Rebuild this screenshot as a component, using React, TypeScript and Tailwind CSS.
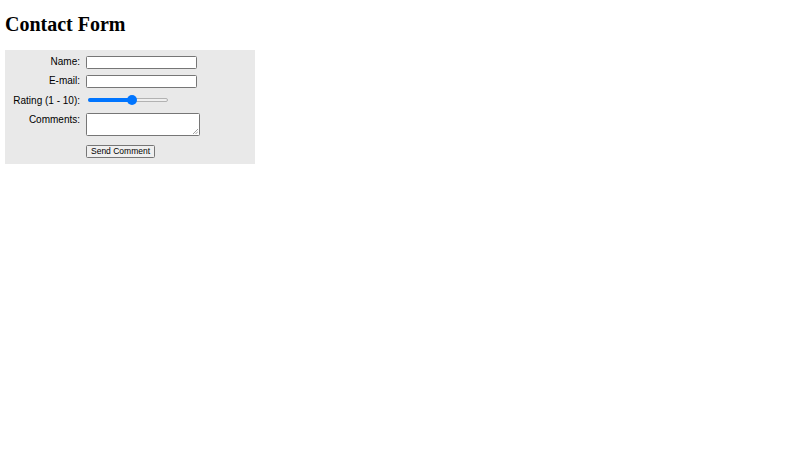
import React from "react";

export default function App() {
  const label = "w-[75px] text-right text-[10px] leading-[11px] text-black";
  const field =
    "h-[13px] border border-[#767676] rounded-[1.5px] bg-white px-[1px] text-[8.33px] outline-none";
  return (
    <div className="min-h-[450px] w-[800px] bg-white px-[5px]" style={{ fontFamily: '"Liberation Sans", Arial, sans-serif' }}>
      <h1
        className="pt-[13.4px] pb-[13.4px] text-[20px] font-bold leading-[23px] text-black"
        style={{ fontFamily: '"Liberation Serif", "Times New Roman", serif' }}
      >
        Contact Form
      </h1>
      <form className="flex w-[250px] flex-col bg-[#e9e9e9] pt-[6px] pb-[6px]">
        <div className="flex items-start gap-[6px]">
          <label className={label}>Name:</label>
          <input type="text" className={field + " w-[111px]"} />
        </div>
        <div className="mt-[6px] flex items-start gap-[6px]">
          <label className={label}>E-mail:</label>
          <input type="text" className={field + " w-[111px]"} />
        </div>
        <div className="mt-[5px] flex h-[14px] items-center gap-[6px]">
          <label className={label + " mt-[1px]"}>Rating (1 - 10):</label>
          <div className="relative ml-[2px] h-[10px] w-[80px]">
            <div className="absolute left-0 right-0 top-[3px] h-[4px] rounded-full border border-[#b2b2b2] bg-[#efefef]" />
            <div className="absolute left-0 top-[3px] h-[4px] w-[44px] rounded-full bg-[#0075ff]" />
            <div className="absolute left-[39px] top-0 h-[10px] w-[10px] rounded-full bg-[#0075ff]" />
          </div>
        </div>
        <div className="mt-[6px] flex items-start gap-[6px]">
          <label className={label + " mt-[1px]"}>Comments:</label>
          <div className="relative h-[23px] w-[114px] rounded-[1.5px] border border-[#767676] bg-white">
            <svg className="absolute bottom-[1px] right-[1px]" width="5" height="5" viewBox="0 0 5 5">
              <path d="M5 0 L0 5 M5 2.5 L2.5 5" stroke="#8a8a8a" strokeWidth="0.8" />
            </svg>
          </div>
        </div>
        <div className="mt-[9px] flex gap-[6px]">
          <div className="w-[75px]" />
          <button
            type="button"
            className="flex h-[13px] items-center rounded-[1.5px] border border-[#767676] bg-[#efefef] px-[4px] text-[8.5px] leading-[10px] text-black"
          >
            Send Comment
          </button>
        </div>
      </form>
    </div>
  );
}
